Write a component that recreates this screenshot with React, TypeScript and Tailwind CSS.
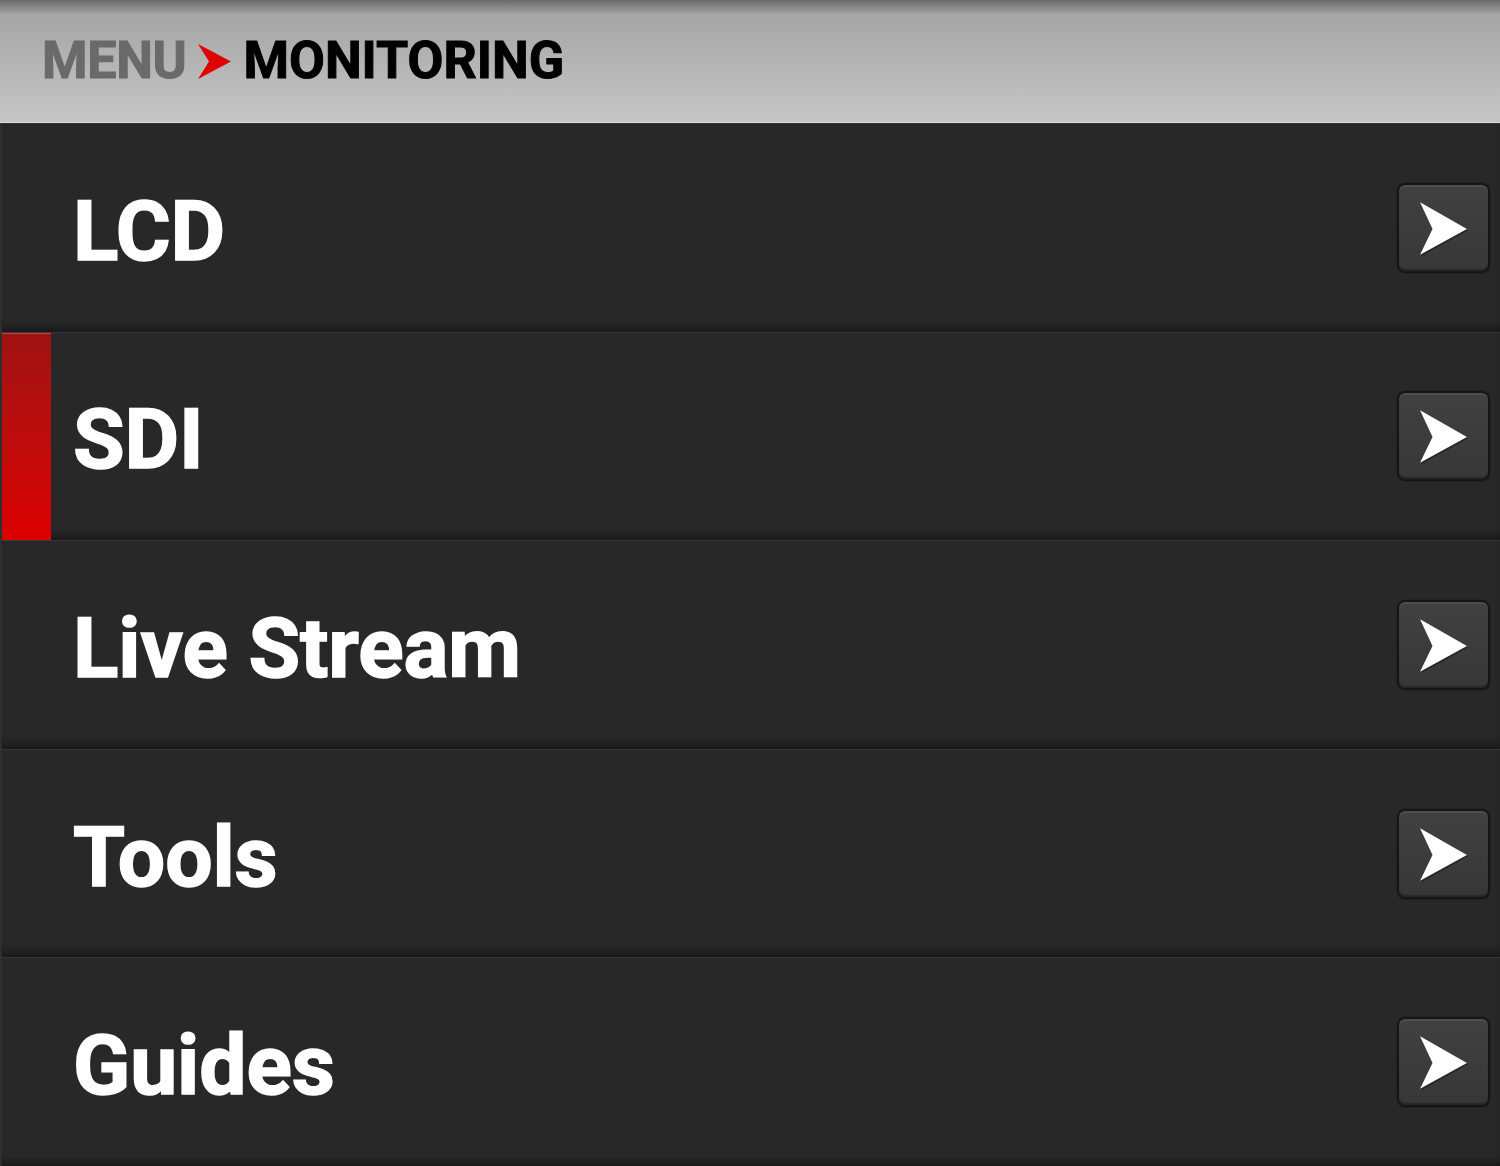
const ITEMS = ["LCD", "SDI", "Live Stream", "Tools", "Guides"];
const SELECTED = 1;

function ArrowButton() {
  return (
    <div className="flex h-[90px] w-[93px] shrink-0 items-center justify-center rounded-[8px] border-2 border-[#161616] bg-gradient-to-b from-[#414141] to-[#373737] shadow-[inset_0_2px_0_rgba(255,255,255,0.07),inset_0_-2px_1px_rgba(0,0,0,0.3),0_0_0_1px_rgba(0,0,0,0.15)]">
      <svg width="93" height="90" viewBox="0 0 93 90" aria-hidden>
        <polygon points="22,18 71,46 22,73 35,46" fill="#000000" opacity="0.35" transform="translate(1 1.5)" />
        <polygon points="22,18 71,46 22,73 35,46" fill="#ffffff" />
      </svg>
    </div>
  );
}

function Row({ label, selected }: { label: string; selected: boolean }) {
  return (
    <div className="flex flex-1 items-stretch border-t border-[#363636] bg-[#282828] shadow-[inset_0_-8px_8px_-4px_rgba(0,0,0,0.45)]">
      <div className="w-[2px] shrink-0 bg-[#2e2e2e]" />
      <div
        className={
          selected
            ? "w-[49px] shrink-0 border-t border-[#c24545] bg-gradient-to-b from-[#a01212] to-[#dc0000]"
            : "w-[49px] shrink-0"
        }
      />
      <div className="flex flex-1 items-center pl-[22px] pr-[10px]">
        <span className="mt-[8px] flex-1 text-[84px] font-bold leading-none tracking-[-0.1px] text-white [-webkit-text-stroke:1.5px_white]">
          {label}
        </span>
        <ArrowButton />
      </div>
    </div>
  );
}

export default function App() {
  return (
    <div
      className="flex h-[1166px] w-[1500px] flex-col overflow-hidden bg-[#1c1c1c]"
      style={{ fontFamily: "Roboto, 'Liberation Sans', sans-serif" }}
    >
      <header className="flex h-[123px] shrink-0 items-center border-b border-[#dcdcdc] bg-gradient-to-b from-[#6a6a6a] via-[#a6a6a6] via-[12%] to-[#c6c6c6] pl-[42px]">
        <span className="text-[52px] font-bold leading-none tracking-[-0.3px] text-[#6a6a6a] [-webkit-text-stroke:1px_#6a6a6a]">
          MENU
        </span>
        <svg width="35" height="37" viewBox="0 0 35 37" className="ml-[10px] mr-[12px]" aria-hidden>
          <polygon points="1,1 34,18.5 1,36 12,18.5" fill="#e00000" />
        </svg>
        <span className="text-[52px] font-bold leading-none tracking-[0px] text-black [-webkit-text-stroke:1px_black]">
          MONITORING
        </span>
      </header>
      <div className="flex flex-1 flex-col">
        {ITEMS.map((label, i) => (
          <Row key={label} label={label} selected={i === SELECTED} />
        ))}
      </div>
    </div>
  );
}
